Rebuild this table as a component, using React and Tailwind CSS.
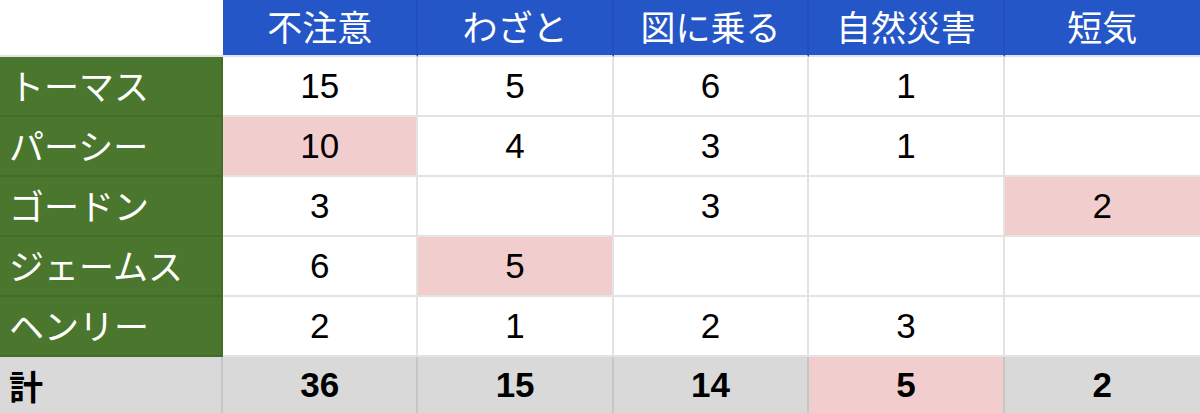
import React from 'react'

const heads = ['不注意', 'わざと', '図に乗る', '自然災害', '短気']

const rows = [
  { name: 'トーマス', vals: ['15', '5', '6', '1', ''], pink: [] },
  { name: 'パーシー', vals: ['10', '4', '3', '1', ''], pink: [0] },
  { name: 'ゴードン', vals: ['3', '', '3', '', '2'], pink: [4] },
  { name: 'ジェームス', vals: ['6', '5', '', '', ''], pink: [1] },
  { name: 'ヘンリー', vals: ['2', '1', '2', '3', ''], pink: [] },
]

const total = { vals: ['36', '15', '14', '5', '2'], pink: [3] }

const App = () => {
  return (
    <div className="w-[1200px] h-[413px] bg-white overflow-hidden">
      <div className="grid grid-cols-[223px_repeat(5,1fr)] grid-rows-[57px_repeat(5,60px)_56px]">
        <div className="bg-white border-b-2 border-[#e3e3e3]"></div>
        {heads.map((h, i) => (
          <div
            key={h}
            className={
              "bg-[#2456c7] text-white text-[35px] font-['Noto_Sans_CJK_JP','Noto_Sans',sans-serif] flex items-center justify-center pb-[2px] border-b-2 border-b-[#dde3f2] " +
              (i < 4 ? 'border-r-2 border-r-[#2150ba]' : '')
            }
          >
            {h}
          </div>
        ))}

        {rows.map((r) => (
          <React.Fragment key={r.name}>
            <div className="bg-[#4a762d] text-white text-[35px] font-['Noto_Sans_CJK_JP','Noto_Sans',sans-serif] flex items-center pl-[9px] pb-[2px] border-b-2 border-b-[#436c29] border-r-2 border-r-[#436c29]">
              {r.name}
            </div>
            {r.vals.map((v, i) => (
              <div
                key={i}
                className={
                  "text-black text-[35px] font-['Liberation_Sans',Arial,sans-serif] flex items-center justify-center border-b-2 border-[#e3e3e3] " +
                  (i < 4 ? 'border-r-2 ' : '') +
                  (r.pink.includes(i) ? 'bg-[#f2cdcd]' : 'bg-white')
                }
              >
                {v}
              </div>
            ))}
          </React.Fragment>
        ))}

        <div className="bg-[#d9d9d9] text-black text-[34px] font-bold font-['Noto_Sans_CJK_JP','Noto_Sans',sans-serif] flex items-center pl-[9px] border-r-2 border-[#c6c6c6]">
          計
        </div>
        {total.vals.map((v, i) => (
          <div
            key={i}
            className={
              "text-black text-[35px] font-bold font-['Liberation_Sans',Arial,sans-serif] flex items-center justify-center border-[#c6c6c6] " +
              (i < 4 ? 'border-r-2 ' : '') +
              (total.pink.includes(i) ? 'bg-[#f2cdcd]' : 'bg-[#d9d9d9]')
            }
          >
            {v}
          </div>
        ))}
      </div>
    </div>
  )
}

export default App
